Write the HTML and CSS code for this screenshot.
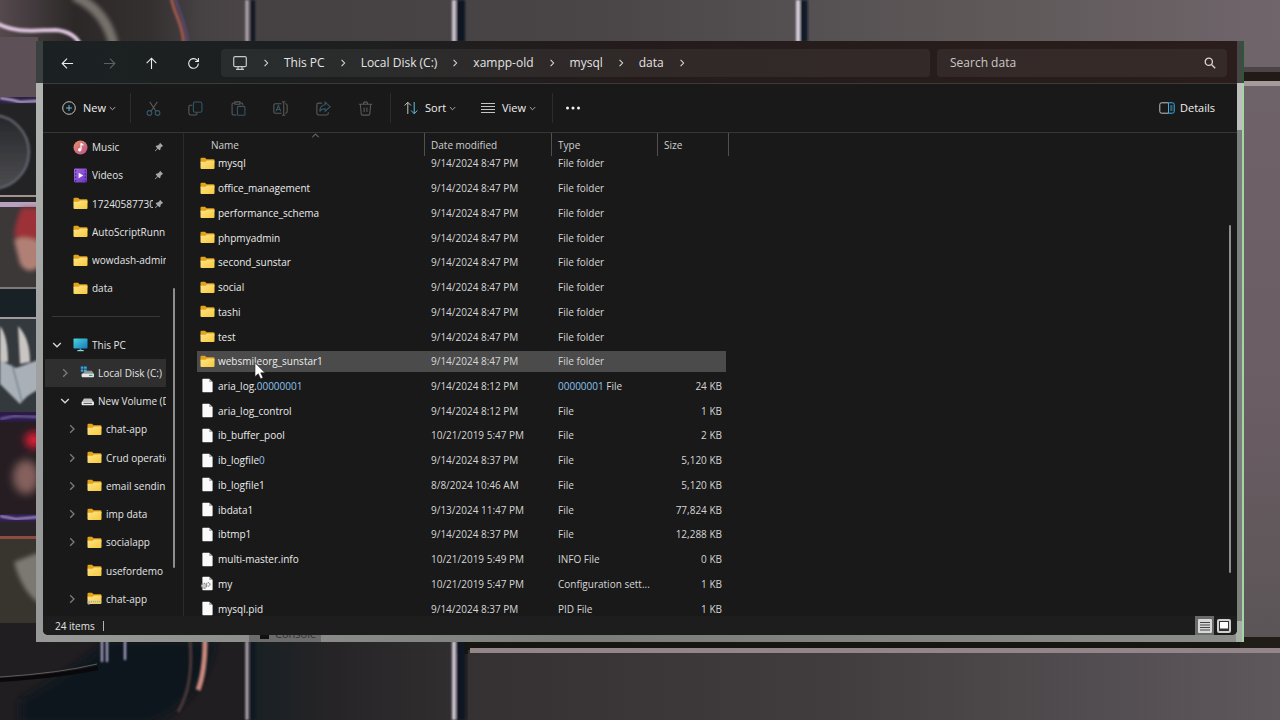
FILE: index.html
```html
<!DOCTYPE html>
<html lang="en">
<head>
<meta charset="utf-8">
<title>data - File Explorer</title>
<link rel="stylesheet" href="styles.css">
</head>
<body>
<svg class="defs" aria-hidden="true">
  <defs>
    <linearGradient id="gFolder" x1="0" y1="0" x2="1" y2="1"><stop offset="0" stop-color="#ffe68a"/><stop offset="1" stop-color="#f6c83c"/></linearGradient>
    <linearGradient id="gMusic" x1="0" y1="0" x2="1" y2="1"><stop offset="0" stop-color="#e8926a"/><stop offset="1" stop-color="#b9508e"/></linearGradient>
    <linearGradient id="gVideo" x1="0" y1="0" x2="1" y2="1"><stop offset="0" stop-color="#a668e0"/><stop offset="1" stop-color="#6a35c4"/></linearGradient>
    <linearGradient id="gPc" x1="0" y1="0" x2="1" y2="1"><stop offset="0" stop-color="#4ad6dc"/><stop offset="1" stop-color="#1579bd"/></linearGradient>
  </defs>
  <symbol id="folder" viewBox="0 0 15 14"><path d="M0.5 2.3Q.5 1.3 1.5 1.3H5L6.6 2.8H13.4Q14.5 2.8 14.5 3.8V6H.5Z" fill="#e2a21c"/><path d="M.5 5.2H5.6L7 4H13.5Q14.5 4 14.5 5V11.6Q14.5 12.6 13.5 12.6H1.5Q.5 12.6.5 11.6Z" fill="url(#gFolder)"/></symbol>
  <symbol id="folderzip" viewBox="0 0 15 14"><use href="#folder"/><path d="M1 9H14V11.6H1Z" fill="#d9cfa4"/><path d="M2 10.3h11" stroke="#a79a6d" stroke-dasharray="1 1"/><path d="M.8 10h2v3h-2z" fill="#b9b6a8"/></symbol>
  <symbol id="file" viewBox="0 0 15 15"><path d="M3 .8H9.2L12.6 4V13.4Q12.6 14.2 11.8 14.2H3Q2.4 14.2 2.4 13.4V1.4Q2.4.8 3 .8Z" fill="#fafafa"/><path d="M9.2.8L12.6 4H9.8Q9.2 4 9.2 3.4Z" fill="#a9a9a9"/></symbol>
  <symbol id="config" viewBox="0 0 15 15"><use href="#file"/><circle cx="4" cy="9.8" r="2.6" fill="#d0d0d0"/><g fill="none" stroke="#8a8a8a"><circle cx="4" cy="9.8" r="2.4" stroke-width="1.4" stroke-dasharray="1.3 .7"/><circle cx="8.2" cy="8.4" r="1.700" stroke-width="1.2" stroke-dasharray="1.1 .6"/></g></symbol>
  <symbol id="music" viewBox="0 0 15 15"><circle cx="7.5" cy="7.5" r="7" fill="url(#gMusic)"/><path d="M8 3.2V9.6" stroke="#fff" stroke-width="1.2"/><path d="M8 3l2.4 1.2v1.5L8 4.8Z" fill="#fff"/><circle cx="6.7" cy="9.8" r="1.7" fill="#fff"/></symbol>
  <symbol id="video" viewBox="0 0 15 15"><rect x="1" y=".5" width="13" height="14" rx="1.4" fill="url(#gVideo)"/><path d="M2.6 2V14M12.4 2V14" stroke="#4b2391" stroke-width="1.2" stroke-dasharray="1.5 1.8"/><path d="M5.6 4.8L10.2 7.5L5.6 10.2Z" fill="#fff"/></symbol>
  <symbol id="pc" viewBox="0 0 15 15"><rect x=".5" y="1.5" width="14" height="10" rx=".8" fill="url(#gPc)"/><path d="M6.5 11.5h2v1.6h-2z" fill="#3b99b8"/><path d="M4.3 13.6h6.4" stroke="#8fd2de" stroke-width="1.2"/></symbol>
  <symbol id="osdisk" viewBox="0 0 15 15"><path d="M.8 1.4h2.6v2.4H.8zM4 1.4h2.8v2.4H4zM.8 4.4h2.6v2.4H.8zM4 4.4h2.8v2.4H4z" fill="#2fa8ea"/><path d="M5 5.8h6.8l2 3H2.6Z" fill="#8f9496"/><rect x="1.6" y="8.6" width="12.4" height="3.6" rx="1" fill="#e3e5e6"/><path d="M9 10.4h3.5" stroke="#3f9a83" stroke-width="1.2"/></symbol>
  <symbol id="disk" viewBox="0 0 15 15"><path d="M4 4.6h7.4l2 3.2H2Z" fill="#bfc1c2"/><rect x="1.6" y="7.6" width="12.4" height="3.6" rx="1" fill="#e8e8e8"/><path d="M3.5 9.4h8.5" stroke="#555" stroke-width="1"/></symbol>
  <symbol id="pin" viewBox="0 0 12 12"><path d="M7.2 1L11 4.8L9.6 5.4L8 7L7.6 9.4L6.6 10L4.6 8L1.6 11L1 10.4L4 7.4L2 5.4L2.6 4.4L5 4L6.6 2.4Z" fill="#a3a8aa"/></symbol>
  <symbol id="right" viewBox="0 0 10 10"><path d="M3.2 1.2L7 5L3.2 8.8" fill="none" stroke="currentColor" stroke-width="1.3"/></symbol>
  <symbol id="down" viewBox="0 0 10 10"><path d="M1.2 3L5 6.8L8.8 3" fill="none" stroke="currentColor" stroke-width="1.3"/></symbol>
</svg>

<svg class="wallpaper" viewBox="0 0 1280 720" preserveAspectRatio="none" aria-hidden="true">
  <defs>
    <linearGradient id="wTop"><stop offset="0" stop-color="#433f40"/><stop offset=".45" stop-color="#494546"/><stop offset=".8" stop-color="#605a5b"/><stop offset="1" stop-color="#70656b"/></linearGradient>
    <linearGradient id="wLow"><stop offset="0" stop-color="#353132"/><stop offset=".45" stop-color="#413d3e"/><stop offset="1" stop-color="#5e585c"/></linearGradient>
    <linearGradient id="wMid"><stop offset="0" stop-color="#182024"/><stop offset=".4" stop-color="#262426"/><stop offset="1" stop-color="#312e30"/></linearGradient>
    <linearGradient id="wSide" x2="0" y2="1"><stop offset="0" stop-color="#6f646a"/><stop offset=".6" stop-color="#6a5d63"/><stop offset="1" stop-color="#5b5557"/></linearGradient>
    <linearGradient id="wCorner"><stop offset="0" stop-color="#55494e"/><stop offset=".3" stop-color="#2b2827"/><stop offset=".6" stop-color="#343030"/><stop offset=".8" stop-color="#464143"/><stop offset="1" stop-color="#4b4548"/></linearGradient>
    <linearGradient id="wLens" x2="0" y2="1"><stop offset="0" stop-color="#26282c"/><stop offset="1" stop-color="#4d4d51"/></linearGradient>
    <filter id="s1"><feGaussianBlur stdDeviation=".8"/></filter>
    <filter id="s2" x="-50%" y="-50%" width="200%" height="200%"><feGaussianBlur stdDeviation="2"/></filter>
    <filter id="s3" x="-50%" y="-50%" width="200%" height="200%"><feGaussianBlur stdDeviation="4"/></filter>
  </defs>
  <rect width="1280" height="720" fill="#282427"/>
  <rect width="1280" height="60" fill="url(#wTop)"/>
  <rect width="250" height="60" fill="url(#wCorner)"/>
  <g fill="none">
    <path d="M74 -4Q106 10 114 46" stroke="#77716c" stroke-width="10" filter="url(#s2)"/>
    <g filter="url(#s1)">
      <path d="M-4 23C18 34 36 30 56 30Q74 32 80 44" stroke="#ddc4dc" stroke-width="4"/>
      <path d="M171 -4C174 16 182 20 184 44" stroke="#a45a4c" stroke-width="3"/>
      <path d="M175 -4C178 12 187 24 188 44" stroke="#5a4b7a" stroke-width="2"/>
    </g>
  </g>
  <rect y="37" width="38" height="60" fill="#5d5057"/>
  <rect y="97" width="38" height="7" fill="#2c2245"/>
  <path d="M0 98l12 2l8 2l18-1" stroke="#d8c6ee" stroke-width="2" fill="none" filter="url(#s1)"/>
  <rect y="104" width="38" height="96" fill="#232225"/>
  <circle cx="-8" cy="152" r="37" fill="url(#wLens)" stroke="#666973" stroke-width="2" filter="url(#s1)"/>
  <rect y="195" width="38" height="2" fill="#a3938c"/>
  <rect y="202" width="38" height="5" fill="#b7a1c0"/>
  <rect y="207" width="38" height="81" fill="#3c3838"/>
  <g filter="url(#s2)"><path d="M22 208H42V246Q24 244 14 236Q16 218 22 208Z" fill="#9c3039"/><path d="M14 240Q24 234 40 242V266Q28 276 20 264Z" fill="#b08076"/></g>
  <rect y="288" width="38" height="30" fill="#172126"/>
  <rect y="287" width="38" height="2" fill="#7e797b"/>
  <rect y="317" width="38" height="2" fill="#a39b9b"/>
  <rect y="319" width="38" height="93" fill="#34393d"/>
  <g filter="url(#s1)"><path d="M0 326q8 10 8 36H0zM18 326q12 12 12 36l-10 2z" fill="#c9c5c2"/><path d="M0 360L16 368L38 360V390Q28 394 20 404L0 384Z" fill="#a9b0b8"/><path d="M12 364L22 402" stroke="#596570"/></g>
  <rect y="412" width="38" height="10" fill="#2a1b48"/>
  <path d="M0 419l14-3l24 1" stroke="#7d6cae" stroke-width="2" fill="none" filter="url(#s1)"/>
  <rect y="422" width="38" height="94" fill="#251d22"/>
  <g filter="url(#s3)"><ellipse cx="34" cy="440" rx="9" ry="8" fill="#e31a35"/><ellipse cx="26" cy="477" rx="13" ry="17" fill="#85615d"/></g>
  <rect y="514" width="38" height="8" fill="#2f2050"/>
  <path d="M0 516l16 3l22-2" stroke="#b9a3dc" stroke-width="2" fill="none" filter="url(#s1)"/>
  <rect y="536" width="38" height="3" fill="#8d4b40"/>
  <rect y="539" width="38" height="84" fill="#38352f"/>
  <path d="M14 562L40 552V604Q22 592 14 562Z" fill="#7b7972" filter="url(#s2)"/>
  <rect y="623" width="250" height="100" fill="#211e22"/>
  <path d="M20 700Q70 674 108 640H215Q205 700 150 724H20Z" fill="#07191f" filter="url(#s3)"/>
  <path d="M0 680Q60 676 98 668" stroke="#09090b" stroke-width="4" fill="none"/>
  <path d="M0 677Q60 673 97 664" stroke="#625a59" fill="none"/>
  <g filter="url(#s1)" fill="none"><path d="M102 640V662M107 640V662M125 640V660" stroke="#bbb2da" stroke-width="2"/><path d="M205 640Q205 672 198 690" stroke="#c9887c" stroke-width="5"/><path d="M190 640Q194 685 178 712" stroke="#4e3937" stroke-width="3"/></g>
  <rect x="250" y="640" width="204" height="80" fill="url(#wMid)"/>
  <rect x="456" y="640" width="824" height="14" fill="#171510"/>
  <rect x="468" y="650" width="812" height="70" fill="url(#wLow)"/>
  <rect x="470" y="648" width="810" height="5" fill="#92868a"/>
  <g filter="url(#s1)">
    <path d="M253 0V42M253 641V720" stroke="#101620" stroke-width="4"/><path d="M247 0V42M247 641V720" stroke="#b5adb9" stroke-width="3"/>
    <path d="M461 0V42M461 641V720" stroke="#0c1523" stroke-width="8"/><path d="M454 0V42M454 641V720" stroke="#cbc2d0" stroke-width="4"/>
    <path d="M804 0V42" stroke="#101a28" stroke-width="7"/><path d="M798 0V42" stroke="#d5cddb" stroke-width="4"/>
  </g>
  <rect x="1240" y="41" width="40" height="601" fill="url(#wSide)"/>
  <rect x="1240" y="67" width="40" height="5" fill="#4b4548"/>
  <rect x="1240" y="72" width="40" height="9" fill="#211a16"/>
  <rect x="1240" y="81" width="40" height="5" fill="#a69a9d"/>
  <rect x="1240" y="637" width="40" height="11" fill="#211e17"/>
</svg>

<div class="frame">
  <div class="behind"><span class="swatch"></span>Console</div>
  <main class="window">
    <header class="titlebar">
      <nav class="navbuttons" aria-label="History">
        <button class="iconbtn" aria-label="Back"><svg viewBox="0 0 14 14"><path d="M13 7H1.500M6.500 1.800L1.300 7L6.500 12.200"/></svg></button>
        <button class="iconbtn faded" aria-label="Forward"><svg viewBox="0 0 14 14"><path d="M1 7H12.500M7.500 1.800L12.700 7L7.500 12.200"/></svg></button>
        <button class="iconbtn" aria-label="Up"><svg viewBox="0 0 14 14"><path d="M7 13V1.500M1.800 6.500L7 1.300L12.200 6.500"/></svg></button>
        <button class="iconbtn" aria-label="Refresh"><svg viewBox="0 0 14 14"><path d="M12.200 7A5.200 5.200 0 1 1 10.800 3.400L12.200 4.800M12.300 1.200V4.900H8.700"/></svg></button>
      </nav>
      <nav class="address" aria-label="Address">
        <svg class="crumbicon" viewBox="0 0 16 16"><rect x="1.700" y="1.700" width="12.600" height="10" rx="1.500"/><path d="M6 12v2.200M10 12v2.200M4 14.300h8"/></svg>
        <svg class="chev"><use href="#right"/></svg><a href="#">This PC</a>
        <svg class="chev"><use href="#right"/></svg><a href="#">Local Disk (C:)</a>
        <svg class="chev"><use href="#right"/></svg><a href="#">xampp-old</a>
        <svg class="chev"><use href="#right"/></svg><a href="#">mysql</a>
        <svg class="chev"><use href="#right"/></svg><a href="#">data</a>
        <svg class="chev"><use href="#right"/></svg>
      </nav>
      <label class="search"><input type="text" placeholder="Search data" aria-label="Search data"><svg viewBox="0 0 12 12"><circle cx="4.800" cy="4.800" r="3.600"/><path d="M7.500 7.500L11.200 11.200"/></svg></label>
    </header>

    <div class="toolbar">
      <button class="tool new"><svg class="ticon" viewBox="0 0 14 14"><circle cx="7" cy="7" r="6.300"/><path class="blue" d="M7 4V10M4 7H10"/></svg>New<svg class="caret"><use href="#down"/></svg></button>
      <span class="sep"></span>
      <div class="actions">
        <button aria-label="Cut"><svg viewBox="0 0 14 14"><path d="M3.500 .8L9.300 9.500M10.500 .8L4.700 9.500"/><g class="blue"><circle cx="3.200" cy="11.200" r="2.200"/><circle cx="10.800" cy="11.200" r="2.200"/></g></svg></button>
        <button aria-label="Copy"><svg viewBox="0 0 14 14"><path d="M4 4H2Q.8 4 .8 5.200V11.200Q.8 13 2.500 13H7Q8.500 13 8.500 11"/><rect class="blue" x="5" y="1" width="8" height="9.500" rx="1.500"/></svg></button>
        <button aria-label="Paste"><svg viewBox="0 0 14 14"><path d="M5 13H2.200Q1 13 1 11.800V3Q1 1.800 2.200 1.800H3.500M8.500 1.800H9.800Q11 1.800 11 3V3.700M3.700 .8H8.300V3H3.700Z"/><rect class="blue" x="6" y="5" width="7" height="8.300" rx="1"/></svg></button>
        <button aria-label="Rename"><svg viewBox="0 0 14 14"><path d="M8 2.500H2.200Q.8 2.500 .8 4V10Q.8 11.500 2.200 11.500H8M11.500 2.500Q13.200 2.500 13.200 4V10Q13.200 11.500 11.500 11.500M8.500 .7H11.500M10 .7V13.300M8.500 13.300H11.500"/><path class="blue" d="M2.800 9.500L5 4.200L7.200 9.500M3.500 8H6.500"/></svg></button>
        <button aria-label="Share"><svg viewBox="0 0 14 14"><path d="M5.500 2H2.300Q.8 2 .8 3.500V11.500Q.8 13 2.300 13H10Q11.500 13 11.500 11.500V10.500"/><path class="blue" d="M8.500 1L13.200 5.300L8.500 9.500V7.200Q5 7 3.500 9.800Q3.800 4 8.500 3.500Z"/></svg></button>
        <button aria-label="Delete"><svg viewBox="0 0 14 14"><path d="M.8 3H13.200M5 3Q5 .8 7 .8T9 3M2.200 3L3 12Q3.100 13.200 4.300 13.200H9.700Q10.900 13.200 11 12L11.800 3M5.700 6V10.300M8.300 6V10.300"/></svg></button>
      </div>
      <span class="sep"></span>
      <button class="tool sort"><svg class="ticon" viewBox="0 0 14 14"><path d="M3.800 13V1.300M.6 4.500L3.800 1.300L7 4.500"/><path class="blue" d="M10.200 1V12.700M7 9.500L10.200 12.700L13.400 9.500"/></svg>Sort<svg class="caret"><use href="#down"/></svg></button>
      <button class="tool view"><svg class="ticon" viewBox="0 0 14 14"><path d="M0 2.500H14M0 5.500H14M0 8.500H14M0 11.500H14"/></svg>View<svg class="caret"><use href="#down"/></svg></button>
      <span class="sep"></span>
      <button class="more" aria-label="More options"><svg viewBox="0 0 16 4"><circle cx="2.500" cy="2" r="1.500"/><circle cx="8" cy="2" r="1.500"/><circle cx="13.500" cy="2" r="1.500"/></svg></button>
      <button class="tool details"><svg class="ticon" viewBox="0 0 16 12"><path d="M9.500 .8H2.500Q.8 .8 .8 2.500V9.500Q.8 11.200 2.500 11.200H9.500"/><path class="cyan" d="M9.500 .8V11.200H13.500Q15.200 11.200 15.200 9.500V2.500Q15.200 .8 13.500 .8ZM11.200 4H13.500M11.200 6H13.500M11.200 8H13.500"/></svg>Details</button>
    </div>

    <div class="content">
      <aside class="sidebar">
        <ul class="tree">
          <li><span class="twist"></span><svg class="ico"><use href="#music"/></svg><span class="label">Music</span><svg class="pin"><use href="#pin"/></svg></li>
          <li><span class="twist"></span><svg class="ico"><use href="#video"/></svg><span class="label">Videos</span><svg class="pin"><use href="#pin"/></svg></li>
          <li><span class="twist"></span><svg class="ico"><use href="#folder"/></svg><span class="label">172405877306</span><svg class="pin"><use href="#pin"/></svg></li>
          <li><span class="twist"></span><svg class="ico"><use href="#folder"/></svg><span class="label">AutoScriptRunn</span></li>
          <li><span class="twist"></span><svg class="ico"><use href="#folder"/></svg><span class="label">wowdash-admin</span></li>
          <li><span class="twist"></span><svg class="ico"><use href="#folder"/></svg><span class="label">data</span></li>
          <li class="rule" role="separator"></li>
          <li><svg class="twist open"><use href="#down"/></svg><svg class="ico"><use href="#pc"/></svg><span class="label">This PC</span></li>
          <li class="l1 selected"><svg class="twist"><use href="#right"/></svg><svg class="ico"><use href="#osdisk"/></svg><span class="label">Local Disk (C:)</span></li>
          <li class="l1"><svg class="twist open"><use href="#down"/></svg><svg class="ico"><use href="#disk"/></svg><span class="label">New Volume (D:)</span></li>
          <li class="l2"><svg class="twist"><use href="#right"/></svg><svg class="ico"><use href="#folder"/></svg><span class="label">chat-app</span></li>
          <li class="l2"><svg class="twist"><use href="#right"/></svg><svg class="ico"><use href="#folder"/></svg><span class="label">Crud operatio</span></li>
          <li class="l2"><svg class="twist"><use href="#right"/></svg><svg class="ico"><use href="#folder"/></svg><span class="label">email sendin</span></li>
          <li class="l2"><svg class="twist"><use href="#right"/></svg><svg class="ico"><use href="#folder"/></svg><span class="label">imp data</span></li>
          <li class="l2"><svg class="twist"><use href="#right"/></svg><svg class="ico"><use href="#folder"/></svg><span class="label">socialapp</span></li>
          <li class="l2"><span class="twist"></span><svg class="ico"><use href="#folder"/></svg><span class="label">usefordemo</span></li>
          <li class="l2"><svg class="twist"><use href="#right"/></svg><svg class="ico"><use href="#folderzip"/></svg><span class="label">chat-app</span></li>
        </ul>
        <span class="thumb side"></span>
      </aside>

      <section class="files">
        <table>
          <thead><tr><th class="name">Name<svg class="sorted" viewBox="0 0 10 6"><path d="M1.200 5L5 1.200L8.800 5"/></svg></th><th class="date">Date modified</th><th class="type">Type</th><th class="size">Size</th></tr></thead>
          <tbody>
            <tr><td class="name"><svg><use href="#folder"/></svg>mysql</td><td class="date">9/14/2024 8:47 PM</td><td class="type">File folder</td><td class="size"></td></tr>
            <tr><td class="name"><svg><use href="#folder"/></svg>office_management</td><td class="date">9/14/2024 8:47 PM</td><td class="type">File folder</td><td class="size"></td></tr>
            <tr><td class="name"><svg><use href="#folder"/></svg>performance_schema</td><td class="date">9/14/2024 8:47 PM</td><td class="type">File folder</td><td class="size"></td></tr>
            <tr><td class="name"><svg><use href="#folder"/></svg>phpmyadmin</td><td class="date">9/14/2024 8:47 PM</td><td class="type">File folder</td><td class="size"></td></tr>
            <tr><td class="name"><svg><use href="#folder"/></svg>second_sunstar</td><td class="date">9/14/2024 8:47 PM</td><td class="type">File folder</td><td class="size"></td></tr>
            <tr><td class="name"><svg><use href="#folder"/></svg>social</td><td class="date">9/14/2024 8:47 PM</td><td class="type">File folder</td><td class="size"></td></tr>
            <tr><td class="name"><svg><use href="#folder"/></svg>tashi</td><td class="date">9/14/2024 8:47 PM</td><td class="type">File folder</td><td class="size"></td></tr>
            <tr><td class="name"><svg><use href="#folder"/></svg>test</td><td class="date">9/14/2024 8:47 PM</td><td class="type">File folder</td><td class="size"></td></tr>
            <tr class="hover"><td class="name"><svg><use href="#folder"/></svg><span class="pointed">websmileorg_sunstar1<svg class="cursor" viewBox="0 0 12 18"><path d="M1 .8V14.600L4.300 11.700L6.600 16.800L9 15.700L6.700 10.800H11Z"/></svg></span></td><td class="date">9/14/2024 8:47 PM</td><td class="type">File folder</td><td class="size"></td></tr>
            <tr><td class="name"><svg><use href="#file"/></svg><span>aria_log.<span class="tint">00000001</span></span></td><td class="date">9/14/2024 8:12 PM</td><td class="type"><span><span class="tint">00000001</span> File</span></td><td class="size">24 KB</td></tr>
            <tr><td class="name"><svg><use href="#file"/></svg>aria_log_control</td><td class="date">9/14/2024 8:12 PM</td><td class="type">File</td><td class="size">1 KB</td></tr>
            <tr><td class="name"><svg><use href="#file"/></svg>ib_buffer_pool</td><td class="date">10/21/2019 5:47 PM</td><td class="type">File</td><td class="size">2 KB</td></tr>
            <tr><td class="name"><svg><use href="#file"/></svg><span>ib_logfile<span class="tint">0</span></span></td><td class="date">9/14/2024 8:37 PM</td><td class="type">File</td><td class="size">5,120 KB</td></tr>
            <tr><td class="name"><svg><use href="#file"/></svg>ib_logfile1</td><td class="date">8/8/2024 10:46 AM</td><td class="type">File</td><td class="size">5,120 KB</td></tr>
            <tr><td class="name"><svg><use href="#file"/></svg>ibdata1</td><td class="date">9/13/2024 11:47 PM</td><td class="type">File</td><td class="size">77,824 KB</td></tr>
            <tr><td class="name"><svg><use href="#file"/></svg>ibtmp1</td><td class="date">9/14/2024 8:37 PM</td><td class="type">File</td><td class="size">12,288 KB</td></tr>
            <tr><td class="name"><svg><use href="#file"/></svg>multi-master.info</td><td class="date">10/21/2019 5:49 PM</td><td class="type">INFO File</td><td class="size">0 KB</td></tr>
            <tr><td class="name"><svg><use href="#config"/></svg>my</td><td class="date">10/21/2019 5:47 PM</td><td class="type">Configuration sett...</td><td class="size">1 KB</td></tr>
            <tr><td class="name"><svg><use href="#file"/></svg>mysql.pid</td><td class="date">9/14/2024 8:37 PM</td><td class="type">PID File</td><td class="size">1 KB</td></tr>
          </tbody>
        </table>
        <span class="thumb main"></span>
      </section>
    </div>

    <footer class="status">
      <span class="count">24 items</span>
      <button class="mode active" aria-label="Details view"><svg viewBox="0 0 14 14"><rect width="14" height="14" rx="1" fill="#d8d8d8"/><path d="M2 3.500H12M2 6H12M2 8.500H12M2 11H12" stroke="#444"/></svg></button>
      <button class="mode" aria-label="Thumbnail view"><svg viewBox="0 0 14 14"><rect width="14" height="14" rx="2" fill="#cfcfcf"/><rect x="2" y="2" width="10" height="10" fill="#333"/><rect x="3" y="3" width="8" height="6.500" fill="#fff"/></svg></button>
    </footer>
  </main>
</div>
</body>
</html>
```

FILE: styles.css
```css
* { box-sizing: border-box; }

body {
  margin: 0;
  height: 100vh;
  min-height: 480px;
  display: flex;
  padding: 41px 36px 78px;
  overflow: hidden;
  background: #282427;
  color: #e4e4e4;
  font: 10px/14px "Open Sans", "Noto Sans", sans-serif;
}

button, input { font: inherit; color: inherit; background: none; border: 0; margin: 0; padding: 0; }
ul { list-style: none; margin: 0; padding: 0; }
a { color: inherit; text-decoration: none; }
svg { flex: none; }

.defs { position: absolute; width: 0; height: 0; }
.wallpaper { position: fixed; inset: 0; width: 100%; height: 100%; }

/* Window and the translucent edge around it */
.frame {
  position: relative;
  flex: 1;
  min-width: 0;
  display: flex;
  padding: 0 7px 7px;
  overflow: hidden;
  background:
    linear-gradient(#2c5638 42px, #a5d4a5 42px) right / 2px 100% no-repeat,
    linear-gradient(#454747 42px, #bdbebd 42px, #bdbebd 89px, #7c807d 89px, #7c807d 580px, #a5afa5 580px) right / 8px 100% no-repeat,
    linear-gradient(#3a4040 42px, #b2b4b2 42px, #989b99 70%, #969997) left / 8px 100% no-repeat,
    linear-gradient(90deg, #999b99, #7b7d7b 45%, #8b8d8b);
}
.behind {
  position: absolute;
  left: 213px;
  bottom: 0;
  width: 72px;
  height: 16px;
  display: flex;
  align-items: center;
  gap: 6px;
  padding-left: 11px;
  background: #6b6c6b;
  color: #343434;
  font-size: 11px;
}
.swatch { width: 9px; height: 10px; background: #111; }
.window {
  position: relative;
  flex: 1;
  min-width: 0;
  display: flex;
  flex-direction: column;
  overflow: hidden;
  border-radius: 0 0 5px 5px;
  background: #191919;
}

.titlebar {
  flex: none;
  display: flex;
  align-items: center;
  gap: 7px;
  height: 43px;
  padding: 2px 10px 0 3px;
  border-bottom: 1px solid #3b3b3b;
  background: linear-gradient(90deg, #1b2123, #1d1f1f 25%, #241c1b 50%, #2a1d1b);
  font-size: 12px;
  line-height: 16px;
}
.navbuttons { display: flex; }
.iconbtn { width: 42px; height: 28px; display: grid; place-items: center; }
.iconbtn svg { width: 13px; height: 13px; fill: none; stroke: #ececec; stroke-width: 1.2; }
.iconbtn.faded svg { stroke: #5d6060; }
.address, .search { height: 28px; display: flex; align-items: center; border-radius: 4px; background: rgba(255, 255, 255, .06); }
.address { flex: 698; min-width: 0; gap: 14px; padding-left: 11px; white-space: nowrap; }
.crumbicon { width: 16px; height: 16px; fill: none; stroke: #c9c9c9; stroke-width: 1.2; }
.chev { width: 8px; height: 10px; color: #dcdcdc; }
.search { flex: 266; padding: 0 11px 0 13px; }
.search input { flex: 1; min-width: 0; outline: none; }
.search input::placeholder { color: #cdc8c7; opacity: 1; }
.search svg { width: 12px; height: 12px; fill: none; stroke: #dcd5d3; stroke-width: 1.3; }

.toolbar {
  flex: none;
  display: flex;
  align-items: center;
  height: 49px;
  padding: 0 10px 0 11px;
  border-bottom: 1px solid #363636;
  font-size: 11px;
  line-height: 16px;
}
.toolbar svg { fill: none; stroke: #c4c4c4; stroke-width: 1; }
.toolbar .blue { stroke: #62bfe0; }
.toolbar .cyan { stroke: #3fb0e0; }
.tool { height: 32px; display: flex; align-items: center; padding-left: 8px; color: #f0f0f0; }
.toolbar .ticon { width: 14px; height: 14px; margin-right: 7px; }
.tool .caret { width: 7px; height: 7px; margin-left: 3px; color: #bdbdbd; stroke: none; }
.new { width: 76px; }
.sort { width: 77px; margin-left: 5px; }
.view { width: 79px; }
.details { margin-left: auto; padding-right: 12px; }
.toolbar .details .ticon { width: 16px; height: 12px; margin-right: 5px; }
.sep { width: 1px; height: 30px; background: #2c2c2c; }
.actions { width: 255px; margin: 0 3px 0 1px; display: grid; grid-template-columns: repeat(6, 1fr); }
.actions button { height: 32px; display: grid; place-items: center; }
.actions svg { width: 15px; height: 15px; stroke: #5a5a5a; }
.actions .blue { stroke: #34586a; }
.more { width: 40px; height: 32px; display: grid; place-items: center; }
.toolbar .more svg { width: 16px; height: 4px; fill: #f2f2f2; stroke: none; }

.content { flex: 1; min-height: 0; display: flex; }

.sidebar { position: relative; flex: none; width: 141px; border-right: 1px solid #2b2b2b; }
.tree { height: 100%; margin: 0 17px 0 2px; padding-bottom: 3px; display: grid; grid-template-rows: repeat(17, 1fr); }
.tree li { min-width: 0; min-height: 0; display: flex; align-items: center; padding-left: 7px; overflow: hidden; white-space: nowrap; }
.tree .l1 { padding-left: 15px; }
.tree .l2 { padding-left: 22px; }
.tree .selected { background: #2f2f2f; }
.twist { flex: none; width: 10px; height: 10px; margin-right: 11px; color: #7d7d7d; }
.l1 .twist, .l2 .twist { margin-right: 10px; }
.twist.open { color: #d8d8d8; }
.ico { width: 15px; height: 15px; margin-right: 4px; }
.l1 .ico { margin-right: 3px; }
.label { flex: 1; min-width: 0; overflow: hidden; }
.pin { width: 10px; height: 10px; margin: 0 2px 0 1px; }
.tree .rule { margin: 0 6px 0 7px; padding: 0; }
.rule::before { content: ""; flex: 1; height: 1px; background: #383838; }

.thumb { position: absolute; width: 2px; border-radius: 1px; background: #8d8d8d; }
.thumb.side { right: 8px; top: 32%; bottom: 10%; }
.thumb.main { right: 6px; top: 19%; bottom: 9%; }

.files { position: relative; flex: 1; min-width: 0; overflow: hidden; padding-left: 13px; }
table { height: 100%; display: flex; flex-direction: column; }
thead, tbody { display: grid; }
thead { flex: none; height: 23px; }
/* The list is scrolled so that its first row starts just under the header */
tbody { flex: 1; min-height: 0; margin: -5px 0; grid-auto-rows: 1fr; }
tr { min-height: 0; display: flex; }
th, td { display: flex; align-items: center; flex: none; padding: 0 0 0 6px; white-space: nowrap; font-weight: 400; text-align: left; }
th { color: #d0d0d0; border-right: 1px solid #505050; }
.name { width: 228px; }
.date { width: 127px; }
.type { width: 106px; }
.size { width: 68px; }
th.name { position: relative; padding-left: 14px; }
th.size { width: 71px; }
td.name { padding-left: 3px; color: #ececec; }
td.name > svg { width: 15px; height: 15px; margin-right: 3px; }
td.date, td.type, td.size { color: #d6d6d6; }
td.size { justify-content: flex-end; padding: 0 4px 0 0; }
.hover { position: relative; z-index: 1; }
.hover td { background: #4b4b4b; margin: 2px 0; }
.tint { color: #8cc4ee; }
.sorted { position: absolute; left: 114px; top: 0; width: 9px; height: 5px; fill: none; stroke: #a5a5a5; }
.pointed { position: relative; }
.cursor { position: absolute; left: 36px; top: 8px; width: 12px; height: 18px; fill: #fff; stroke: #222; stroke-width: .6; }

.status { flex: none; position: relative; height: 19px; display: flex; align-items: center; padding: 0 4px 0 12px; background: #1d1d1d; }
.count { margin-right: auto; padding-right: 8px; font-size: 10px; line-height: 10px; border-right: 1px solid #b5b5b5; }
.mode { width: 19px; height: 19px; display: grid; place-items: center; }
.mode.active { background: #6a6a6a; }
.mode svg { width: 14px; height: 14px; }
```
